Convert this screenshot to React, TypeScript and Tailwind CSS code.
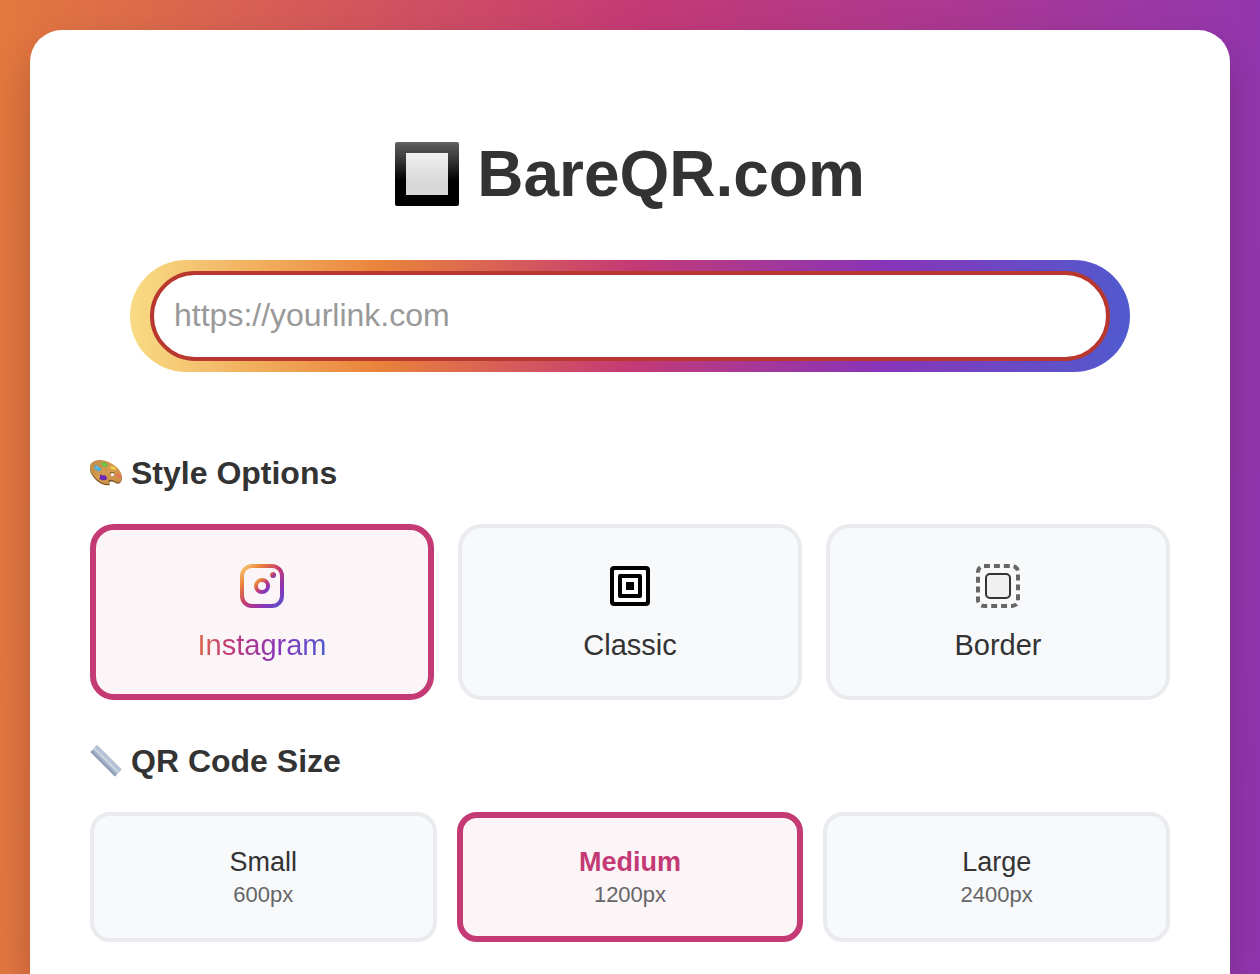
import { useState } from "react";

const InstagramIcon = () => (
  <svg width="44" height="44" viewBox="0 0 44 44" fill="none" aria-hidden="true">
    <defs>
      <linearGradient id="insta" x1="0" y1="0" x2="44" y2="44" gradientUnits="userSpaceOnUse">
        <stop offset="0" stopColor="#f9dc85" />
        <stop offset="0.25" stopColor="#ea833a" />
        <stop offset="0.5" stopColor="#c43a75" />
        <stop offset="0.75" stopColor="#8934b8" />
        <stop offset="1" stopColor="#505bcf" />
      </linearGradient>
      <linearGradient id="instaLens" x1="14" y1="14" x2="30" y2="30" gradientUnits="userSpaceOnUse">
        <stop offset="0" stopColor="#f9dc85" />
        <stop offset="0.25" stopColor="#ea833a" />
        <stop offset="0.5" stopColor="#c43a75" />
        <stop offset="0.75" stopColor="#8934b8" />
        <stop offset="1" stopColor="#505bcf" />
      </linearGradient>
      <linearGradient id="instaDot" x1="30" y1="8" x2="36" y2="14" gradientUnits="userSpaceOnUse">
        <stop offset="0.1" stopColor="#ea833a" />
        <stop offset="0.5" stopColor="#b43880" />
        <stop offset="0.9" stopColor="#6a45c2" />
      </linearGradient>
    </defs>
    <rect x="2" y="2" width="40" height="40" rx="10" stroke="url(#insta)" strokeWidth="4" />
    <circle cx="22" cy="22" r="6" stroke="url(#instaLens)" strokeWidth="4" />
    <circle cx="33" cy="11" r="3" fill="url(#instaDot)" />
  </svg>
);

const ClassicIcon = () => (
  <svg width="44" height="44" viewBox="0 0 44 44" fill="none" aria-hidden="true">
    <rect x="2" y="2" width="40" height="40" rx="4" fill="#000" />
    <rect x="6" y="6" width="32" height="32" rx="1" fill="#fff" />
    <rect x="10" y="10" width="24" height="24" rx="2" fill="#000" />
    <rect x="14" y="14" width="16" height="16" fill="#fff" />
    <rect x="18" y="18" width="8" height="8" fill="#000" />
  </svg>
);

const BorderIcon = () => (
  <svg width="44" height="44" viewBox="0 0 44 44" fill="none" aria-hidden="true">
    <rect x="2" y="2" width="40" height="40" rx="6" pathLength="150" stroke="#666" strokeWidth="4" strokeDasharray="6 4" />
    <rect x="10" y="10" width="24" height="24" rx="4" fill="#f0f0f0" stroke="#333" strokeWidth="2" />
  </svg>
);

const SquareButtonIcon = () => (
  <svg width="64" height="64" viewBox="0 0 64 64" aria-hidden="true">
    <defs>
      <linearGradient id="frame" x1="0" y1="0" x2="0" y2="1">
        <stop offset="0" stopColor="#666" />
        <stop offset="0.05" stopColor="#565856" />
        <stop offset="0.3" stopColor="#333" />
        <stop offset="0.6" stopColor="#000" />
      </linearGradient>
      <linearGradient id="face" x1="0" y1="0" x2="0" y2="1">
        <stop offset="0" stopColor="#f0f0f0" />
        <stop offset="0.7" stopColor="#d8d8d8" />
      </linearGradient>
    </defs>
    <rect width="64" height="64" rx="2" fill="url(#frame)" />
    <rect x="11" y="11" width="42" height="42" fill="url(#face)" />
  </svg>
);

const PaletteIcon = () => (
  <svg width="32" height="32" viewBox="0 0 32 32" aria-hidden="true">
    <defs>
      <linearGradient id="wood" x1="0" y1="0" x2="1" y2="1">
        <stop offset="0" stopColor="#bd8746" />
        <stop offset="0.5" stopColor="#d59c50" />
        <stop offset="1" stopColor="#c88b44" />
      </linearGradient>
    </defs>
    <path
      d="M0 12C0 6 5 4 10 4C20 4.500 31 12 31.800 20C32 23 31 26.600 28 26.700C26 26.700 25 25.500 23 24.800C21 24.200 19.600 24.200 19.300 25.200C19 26.500 20.500 27.500 19.300 28.200C16 29 10 27 6 23C2 19 0 15 0 12Z"
      fill="#7a5023"
    />
    <path
      d="M0 10.500C0 5 5 3 10 3C20 3.500 31 11 31.800 19C32 22 31 25.300 28 25.500C26 25.500 25 24 23 23.300C21 22.700 18.800 22.500 18.500 24C18.200 25.500 20 26.300 19 27C16 28 10 25.500 6 21.500C2 17.500 0 13.500 0 10.500Z"
      fill="url(#wood)"
    />
    <ellipse cx="22.300" cy="17" rx="2.400" ry="2" fill="#7a5023" />
    <ellipse cx="22.400" cy="17.400" rx="1.900" ry="1.500" fill="#fff" />
    <path d="M4.200 8.500 7 8.200 9 10 11.300 11.500 11 13.800 8.500 14.300 5.500 13 4.500 11Z" fill="#4aaedb" />
    <path d="M11 5 13.500 5.800 16 5.500 17.500 8 16.800 9.800 13.800 9.600 11.600 8Z" fill="#5cc43a" />
    <path d="M20 9 22.500 9.600 24.500 9.500 26 11.500 25 13 22.500 12.500 20.800 11.500Z" fill="#f0d04c" />
    <path d="M25.800 16.500 28 17 30.500 18.300 31 20.500 29 21 27 19.700Z" fill="#e8705c" />
    <path d="M10 17.200 12.500 18.200 15.500 18.500 17.300 21 16 23 12.500 23.300 9.200 22 10 20Z" fill="#6a28b4" />
    <path d="M6 10 8 11.500M13 7 15 7.800" stroke="#fff" strokeOpacity="0.4" strokeWidth="0.800" />
  </svg>
);

const RulerIcon = () => (
  <svg width="32" height="32" viewBox="0 0 32 32" aria-hidden="true">
    <path d="M0.500 7 7 0 31.500 24.500 25 31.500Z" fill="#a3b3c7" />
    <path d="M4.500 2.700 7 0 31.500 24.500 29 27.200Z" fill="#b3c2d4" />
    <path d="M3.300 4 4.800 2.400 29.300 26.900 27.800 28.500Z" fill="#ccd7e3" />
    <path d="M0.500 7 25 31.500 26.300 30.100 1.800 5.600Z" fill="#8b9db5" />
  </svg>
);

const styles = [
  { id: "instagram", label: "Instagram", icon: <InstagramIcon /> },
  { id: "classic", label: "Classic", icon: <ClassicIcon /> },
  { id: "border", label: "Border", icon: <BorderIcon /> },
];

const sizes = [
  { label: "Small", px: 600 },
  { label: "Medium", px: 1200 },
  { label: "Large", px: 2400 },
];

const active = "border-6 border-[#c43a75] bg-[#fbf5f8]";
const inactive = "border-4 border-[#e9ebef] bg-[#f8f9fb]";

const App: React.FC = () => {
  const [style, setStyle] = useState("instagram");
  const [size, setSize] = useState(1200);
  const [link, setLink] = useState("");

  return (
    <div className="min-h-screen bg-[linear-gradient(91deg,#e4783e_0%,#c43a75_50%,#9136b0_100%)] px-[30px] pt-[30px] font-['Liberation_Sans',Arial,sans-serif] text-[#333]">
      <main className="min-h-[calc(100vh-30px)] rounded-t-[32px] bg-white px-[60px] pt-[104px] pb-8 shadow-[0_20px_40px_rgba(0,0,0,0.2)]">
        <h1 className="flex items-center justify-center gap-[18px] text-[64px] leading-[80px] font-bold">
          <SquareButtonIcon />
          BareQR.com
        </h1>

        <div className="mx-10 mt-[46px] rounded-full bg-[linear-gradient(93deg,#f9dc85_0%,#ea833a_25%,#c43a75_50%,#8934b8_75%,#505bcf_100%)] px-5 py-[11px]">
          <input
            type="url"
            aria-label="Link"
            placeholder="https://yourlink.com"
            value={link}
            onChange={(e) => setLink(e.target.value)}
            className="block h-[90px] w-full rounded-full border-4 border-[#b8372f] bg-white px-5 pb-0.5 text-[32px] outline-none placeholder:text-[#999]"
          />
        </div>

        <section className="mt-20">
          <h2 className="flex items-center gap-[9px] text-[32px] leading-[42px] font-bold">
            <PaletteIcon />
            Style Options
          </h2>
          <div className="mt-[30px] grid grid-cols-3 gap-6">
            {styles.map((option) => (
              <button
                key={option.id}
                type="button"
                aria-pressed={style === option.id}
                onClick={() => setStyle(option.id)}
                className={`flex h-44 flex-col items-center justify-center gap-5 rounded-3xl pt-0.5 ${style === option.id ? active : inactive}`}
              >
                {option.icon}
                <span
                  className={`text-[29px] leading-[34px] ${
                    option.id === "instagram"
                      ? "bg-[linear-gradient(95deg,#dd6b4a_0%,#c43a75_25%,#8934b8_62%,#505bcf_100%)] bg-clip-text text-transparent"
                      : ""
                  }`}
                >
                  {option.label}
                </span>
              </button>
            ))}
          </div>
        </section>

        <section className="mt-10">
          <h2 className="flex items-center gap-[9px] text-[32px] leading-[42px] font-bold">
            <RulerIcon />
            QR Code Size
          </h2>
          <div className="mt-[30px] grid grid-cols-3 gap-5">
            {sizes.map((option) => (
              <button
                key={option.px}
                type="button"
                aria-pressed={size === option.px}
                onClick={() => setSize(option.px)}
                className={`flex h-[130px] flex-col items-center justify-center rounded-[20px] pt-0.5 ${size === option.px ? active : inactive}`}
              >
                <span className={`text-[27px] leading-[34px] ${size === option.px ? "font-bold text-[#c43a75]" : ""}`}>
                  {option.label}
                </span>
                <span className="text-[22px] leading-[32px] text-[#666]">{option.px}px</span>
              </button>
            ))}
          </div>
        </section>
      </main>
    </div>
  );
};

export default App;
